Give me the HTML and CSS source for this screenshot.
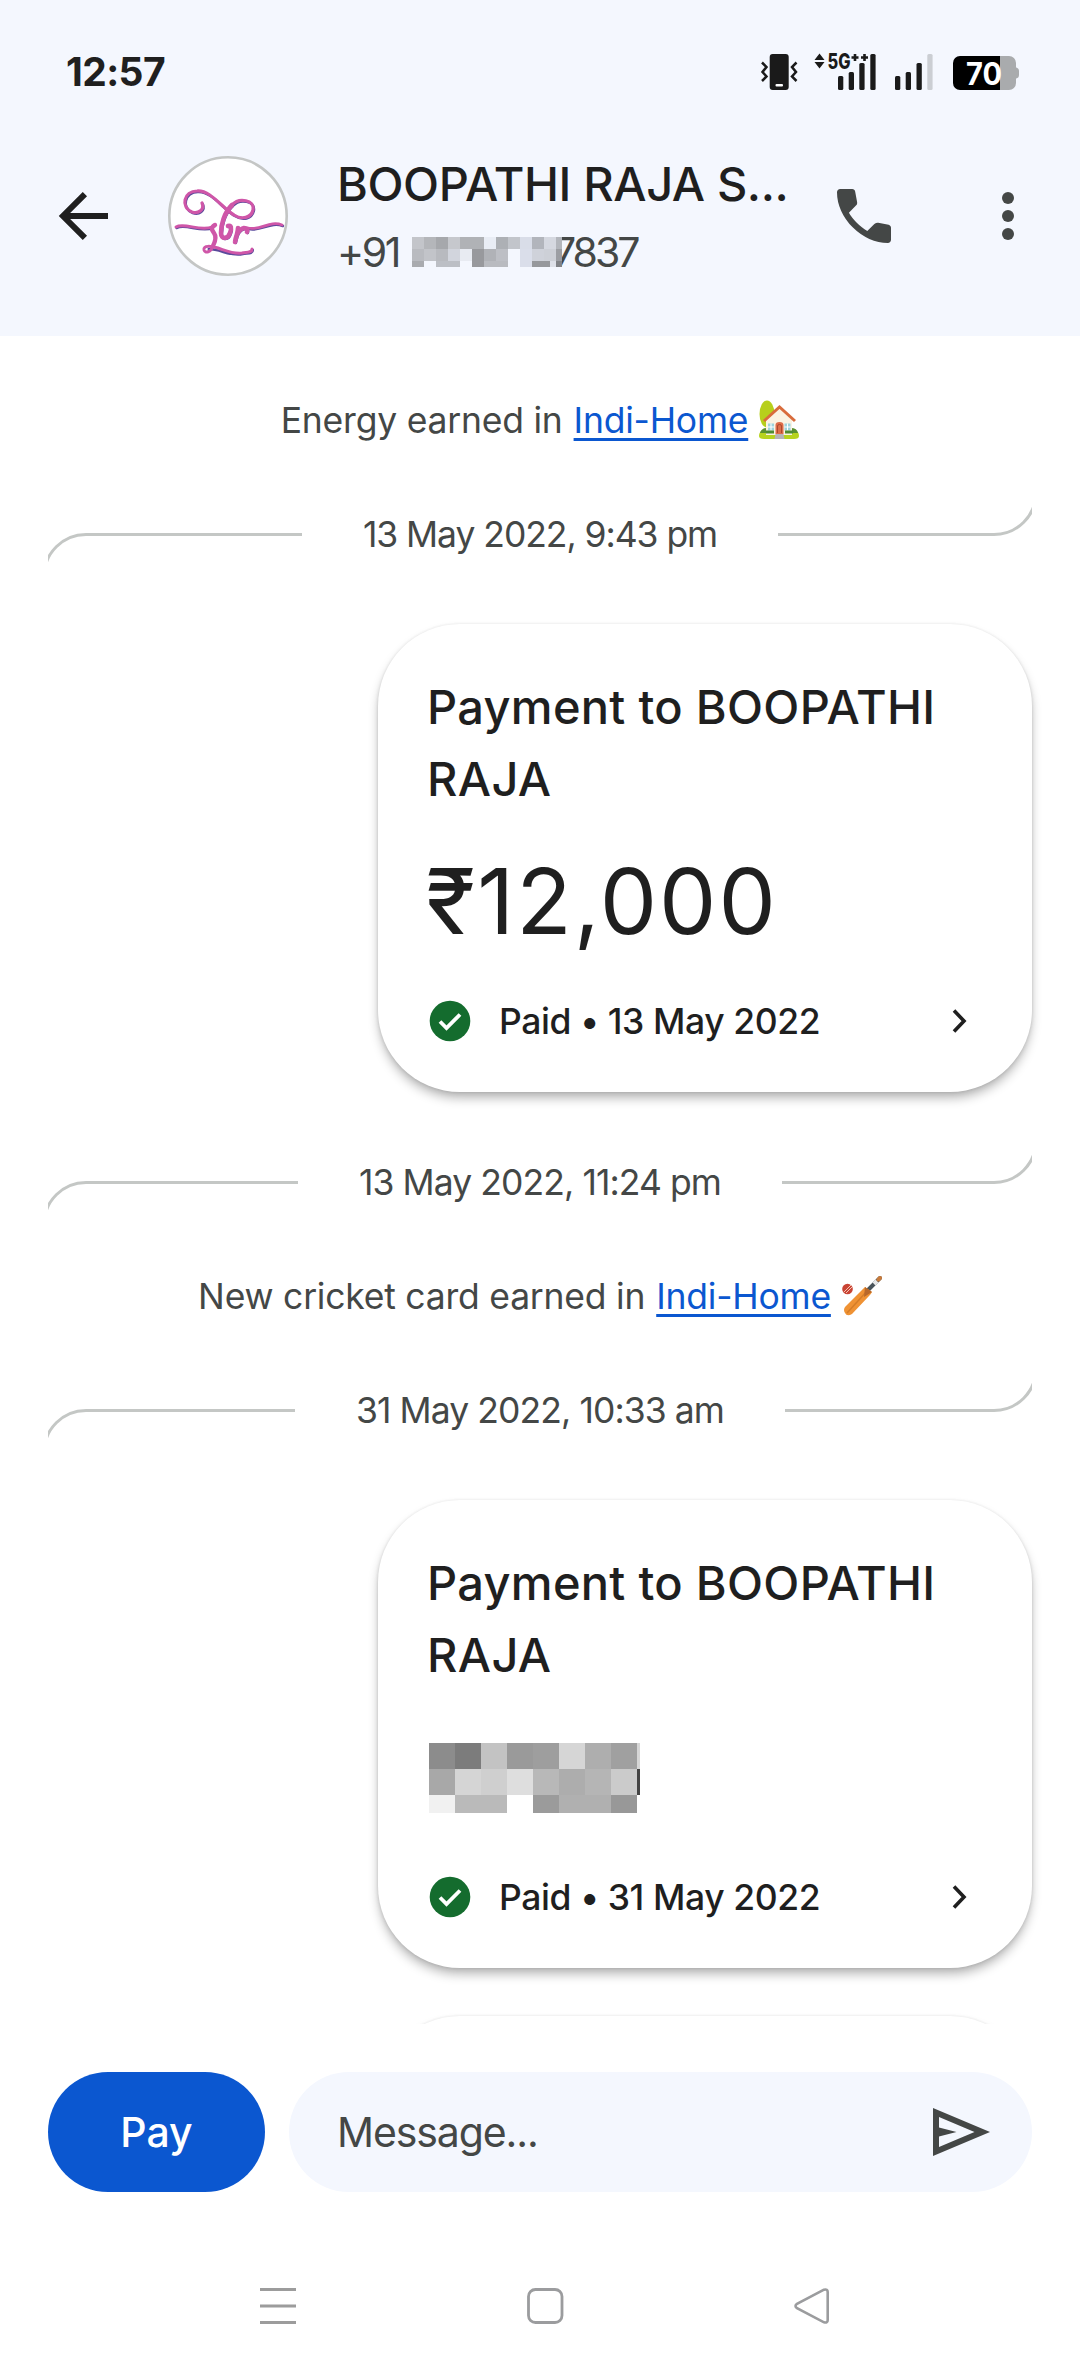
FILE: index.html
```html
<!DOCTYPE html>
<html lang="en">
<head>
<meta charset="utf-8">
<title>Chat</title>
<link rel="stylesheet" href="styles.css">
</head>
<body>
<div class="phone">
  <header class="top">
    <div class="status">
      <span class="clock">12:57</span>
      <svg class="status-icons" width="260" height="54" viewBox="760 40 260 54">
        <rect x="769.700" y="54" width="19" height="36" rx="3" fill="#1a1a1a"/>
        <rect x="775.500" y="84" width="7.500" height="2.400" rx="1" fill="#fff"/>
        <g fill="none" stroke="#1a1a1a" stroke-width="2.500">
          <path d="M762 62.500l4.500 4.500-4 5 4 4.500-4.500 4.500M796.500 62.500l-4.500 4.500 4 5-4 4.500 4.500 4.500"/>
        </g>
        <path d="M819.500 53.500l5 6.500h-10zM819.500 68.500l5-6.500h-10z" fill="#1a1a1a"/>
        <text x="827.500" y="68.800" class="net" textLength="23" lengthAdjust="spacingAndGlyphs">5G</text>
        <path d="M851.500 57.500h7M855 54v7M861 57.500h7M864.500 54v7" stroke="#1a1a1a" stroke-width="2.600"/>
        <g fill="#1a1a1a">
          <rect x="838" y="76" width="5.300" height="14" rx="1.500"/><rect x="848.700" y="72" width="5.300" height="18" rx="1.500"/>
          <rect x="859.300" y="63" width="5.300" height="27" rx="1.500"/><rect x="870.300" y="54" width="5.300" height="36" rx="1.500"/>
          <rect x="895" y="76" width="5.300" height="14" rx="1.500"/><rect x="905.700" y="72" width="5.300" height="18" rx="1.500"/>
          <rect x="916.500" y="63" width="5.300" height="27" rx="1.500"/>
        </g>
        <rect x="927.300" y="54" width="5.300" height="36" rx="1.500" fill="#cbced3"/>
        <path d="M1000 56h9a7 7 0 0 1 7 7v4.500q3 .5 3 3.500v4q0 3-3 3.500V83a7 7 0 0 1-7 7h-9z" fill="#a9abad"/>
        <path d="M1000 56h-40a7 7 0 0 0-7 7v20a7 7 0 0 0 7 7h40z" fill="#000"/>
        <text x="966" y="84.500" class="batt" textLength="36" lengthAdjust="spacingAndGlyphs">70</text>
      </svg>
    </div>
    <div class="bar">
      <svg class="back" width="72" height="72" viewBox="0 0 24 24"><path d="M20 12H5M12.300 4.700L5 12l7.300 7.300" fill="none" stroke="#1f1f1f" stroke-width="2"/></svg>
      <svg class="avatar" width="120" height="120" viewBox="0 0 120 120">
        <circle cx="60" cy="60" r="58.700" fill="#fff" stroke="#c4c6c5" stroke-width="2.600"/>
        <g fill="none" stroke-linecap="round" stroke-linejoin="round">
          <g stroke="#5a4a9c" stroke-width="2.600" transform="translate(.8 1)">
            <path d="M34 47c3 7-4 11-10 9-12-5-8-21 5-21 14-1 25 17 37 24 8 5 17 3 19-5 2-10-14-13-21-5"/>
            <path d="M8 71c8-5 24 5 36 0M80 72c12 3 22-8 34-3"/>
            <path d="M64 49c-8 8-11 20-11 28 0 7 7 6 9 0 2-5 1-8-2-7"/>
            <path d="M70 72c0 4-2 9-3 14 1-7 4-13 9-14 3 0 4 2 3 4"/>
            <path d="M40 92c12 0 22 8 34 5 5-1 10 0 10-4"/>
          </g>
          <g stroke="#cf56a8">
            <path stroke-width="3.200" d="M34 47c3 7-4 11-10 9-12-5-8-21 5-21 14-1 25 17 37 24 8 5 17 3 19-5 2-10-14-13-21-5"/>
            <path stroke-width="2.800" d="M8 71c8-5 24 5 36 0M80 72c12 3 22-8 34-3"/>
            <path stroke-width="4.600" d="M64 49c-8 8-11 20-11 28 0 7 7 6 9 0 2-5 1-8-2-7"/>
            <path stroke-width="4.600" d="M70 72c0 4-2 9-3 14 1-7 4-13 9-14 3 0 4 2 3 4"/>
            <path stroke-width="4.400" d="M47 69c-5 3-3 5-1 8 3 4 1 9-1 13"/>
            <path stroke-width="3" d="M45 90c-2 6-8 8-9 4-1-5 7-4 14-2 9 3 15 6 24 5 5-1 10 0 10-4"/>
          </g>
        </g>
      </svg>
      <div class="who">
        <div class="name">BOOPATHI RAJA S...</div>
        <div class="number"><span class="cc">+91</span>
          <svg class="mask" width="150" height="30" viewBox="0 0 150 30" shape-rendering="crispEdges">
            <path fill="#c3c5ca" d="M0 0h12v12H0z"/><path fill="#b4b6ba" d="M12 0h12v12H12z"/><path fill="#a6a8ac" d="M24 0h12v12H24z"/><path fill="#c6c8cd" d="M36 0h12v12H36z"/><path fill="#b0b2b6" d="M48 0h24v12H48z"/><path fill="#e9edf5" d="M72 0h12v12H72z"/><path fill="#adb0b5" d="M84 0h12v12H84z"/><path fill="#c2c5cb" d="M96 0h12v12H96z"/><path fill="#d9dde8" d="M108 0h12v12h-12z"/><path fill="#b2b5bc" d="M120 0h12v12h-12z"/><path fill="#d5d8e0" d="M132 0h12v12h-12z"/><path fill="#b3b6bc" d="M144 0h6v12h-6z"/>
            <path fill="#b9bbc0" d="M0 12h12v12H0z"/><path fill="#c2c4c9" d="M12 12h12v12H12z"/><path fill="#b8babf" d="M24 12h12v12H24z"/><path fill="#d2d5dd" d="M36 12h12v12H36z"/><path fill="#e8ebf2" d="M48 12h12v12H48z"/><path fill="#98999d" d="M60 12h12v12H60z"/><path fill="#b0b2b7" d="M72 12h12v12H72z"/><path fill="#bdbfc5" d="M84 12h12v12H84z"/><path fill="#f4f7fe" d="M96 12h12v18H96z"/><path fill="#dadeea" d="M108 12h12v12h-12z"/><path fill="#cfd2da" d="M120 12h12v12h-12z"/><path fill="#cdd0d7" d="M132 12h12v12h-12z"/><path fill="#9c9ea3" d="M144 12h6v12h-6z"/>
            <path fill="#a9abaf" d="M0 24h12v6H0z"/><path fill="#bcbfc5" d="M24 24h24v6H24z"/><path fill="#98999d" d="M60 24h12v6H60z"/><path fill="#b9bbc0" d="M72 24h24v6H72z"/><path fill="#dadeea" d="M108 24h12v6h-12z"/><path fill="#96989c" d="M120 24h18v6h-18z"/><path fill="#dde0e8" d="M138 24h6v6h-6z"/><path fill="#808286" d="M144 24h6v6h-6z"/>
          </svg><span class="tail">7837</span></div>
      </div>
      <svg class="call" width="72" height="72" viewBox="0 0 24 24"><path fill="#444746" d="M19.950 21q-3.125 0-6.175-1.362t-5.550-3.863-3.862-5.550T3 4.050q0-.45.3-.75t.75-.3H8.100q.35 0 .625.238t.325.562l.65 3.500q.05.4-.025.675T9.400 8.450L6.975 10.900q.5.925 1.187 1.787t1.513 1.663q.775.775 1.625 1.438T13.100 17l2.350-2.350q.225-.225.588-.337t.712-.063l3.450.7q.35.100.575.363T21 15.900v4.050q0 .45-.3.75t-.75.300"/></svg>
      <svg class="more" width="72" height="72" viewBox="0 0 24 24" fill="#444746"><circle cx="12" cy="6" r="2"/><circle cx="12" cy="12" r="2"/><circle cx="12" cy="18" r="2"/></svg>
    </div>
  </header>

  <main class="chat">
    <div class="note n1"><span>Energy earned in</span><a>Indi-Home</a>
      <svg class="emoji" width="40" height="40" viewBox="0 0 40 40">
        <ellipse cx="8" cy="14" rx="7.500" ry="13.500" fill="#b7cf1c"/>
        <path d="M0 36q0-5 5-6h30q5 1 5 6 0 3-5 3H5q-5 0-5-3z" fill="#b7d31e"/>
        <path d="M1 33q1-5 7-5h24q6 0 7 5z" fill="#5b9130"/>
        <path d="M20 8L7 20v15h26V20z" fill="#fbf3e2"/>
        <path d="M5 21L20.500 7 36 21" fill="none" stroke="#d96c3c" stroke-width="3"/>
        <path d="M9 23.500h6v7H9zM25.500 23.500h6v7h-6z" fill="#9ed3dc"/><path d="M12 23.500v7M9 27h6M28.500 23.500v7M25.500 27h6" stroke="#fff"/>
        <path d="M7 32h8M26 32h8" stroke="#4e8c33" stroke-width="3"/>
        <path d="M16.500 34V25q0-3 4-3t4 3v9z" fill="#dd6c48"/><path d="M18.500 33v-7q0-1.500 2-1.500t2 1.500v7" stroke="#ac4a2d" fill="none"/>
        <path d="M16.500 34h8l1 5h-10z" fill="#b6b3b5"/>
      </svg>
    </div>
    <div class="divider d1"><i class="rule left"><svg width="38" height="35" viewBox="0 0 38 35"><path d="M-4 43.500A42 42 0 0 1 38 1.500"/></svg></i><time>13 May 2022, 9:43 pm</time><i class="rule right"><svg width="38" height="35" viewBox="0 0 38 35"><path d="M0 33.500A42 42 0 0 0 42-8.500"/></svg></i></div>

    <section class="card">
      <h2>Payment to BOOPATHI<br>RAJA</h2>
      <div class="amount">₹12,000</div>
      <div class="paid">
        <svg width="42" height="42" viewBox="0 0 42 42"><circle cx="21" cy="21" r="20.300" fill="#146c2e"/><path d="M11 21.500l6.500 6.500 13.500-13.500" fill="none" stroke="#fff" stroke-width="3.800"/></svg>
        <span>Paid • 13 May 2022</span>
        <svg class="chev" width="16" height="26" viewBox="0 0 16 26"><path d="M2 2.500l10 10.500-10 10.500" fill="none" stroke="#1f1f1f" stroke-width="3.600"/></svg>
      </div>
    </section>

    <div class="divider d2"><i class="rule left"><svg width="38" height="35" viewBox="0 0 38 35"><path d="M-4 43.500A42 42 0 0 1 38 1.500"/></svg></i><time>13 May 2022, 11:24 pm</time><i class="rule right"><svg width="38" height="35" viewBox="0 0 38 35"><path d="M0 33.500A42 42 0 0 0 42-8.500"/></svg></i></div>
    <div class="note n2"><span>New cricket card earned in</span><a>Indi-Home</a>
      <svg class="emoji" width="40" height="40" viewBox="0 0 40 40">
        <path d="M26 14L38 2" stroke="#49545b" stroke-width="4" stroke-linecap="round"/><path d="M32 8l3-3" stroke="#e8e8e8" stroke-width="4"/><path d="M36.500 3.500L38 2" stroke="#c77b3c" stroke-width="4" stroke-linecap="round"/>
        <path d="M23 11l7 5q-1 2-3 4L10 38q-5 3-7-1-2-3 0-6l17-17q2-2 3-3z" fill="#ef9234"/><path d="M26 14L5 37" stroke="#d57d28" stroke-width="1.500"/><path d="M23 11l7 5-8 5z" fill="#b9682a"/>
        <circle cx="5.500" cy="13" r="5.300" fill="#c94334"/><path d="M2 16l7-7M4 17l6-6" stroke="#f5c5b3" stroke-width="1"/>
      </svg>
    </div>
    <div class="divider d3"><i class="rule left"><svg width="38" height="35" viewBox="0 0 38 35"><path d="M-4 43.500A42 42 0 0 1 38 1.500"/></svg></i><time>31 May 2022, 10:33 am</time><i class="rule right"><svg width="38" height="35" viewBox="0 0 38 35"><path d="M0 33.500A42 42 0 0 0 42-8.500"/></svg></i></div>

    <section class="card">
      <h2>Payment to BOOPATHI<br>RAJA</h2>
      <div class="amount hidden-amount">
        <svg width="212" height="70" viewBox="0 0 212 70" shape-rendering="crispEdges">
          <path fill="#8c8c8c" d="M0 0h26v26H0z"/><path fill="#7c7c7c" d="M26 0h26v26H26z"/><path fill="#c3c3c3" d="M52 0h26v26H52z"/><path fill="#9a9a9a" d="M78 0h26v26H78z"/><path fill="#9e9e9e" d="M104 0h26v26h-26z"/><path fill="#d6d6d6" d="M130 0h26v26h-26z"/><path fill="#aeaeae" d="M156 0h26v26h-26z"/><path fill="#a0a0a0" d="M182 0h26v26h-26z"/><path fill="#d6d6d6" d="M208 0h3v26h-3z"/>
          <path fill="#a8a8a8" d="M0 26h26v26H0z"/><path fill="#d5d5d5" d="M26 26h26v26H26z"/><path fill="#cfcfcf" d="M52 26h26v26H52z"/><path fill="#dedede" d="M78 26h26v26H78z"/><path fill="#b8b8b8" d="M104 26h26v26h-26z"/><path fill="#adadad" d="M130 26h26v26h-26z"/><path fill="#b5b5b5" d="M156 26h26v26h-26z"/><path fill="#cbcbcb" d="M182 26h26v26h-26z"/><path fill="#444" d="M208 26h3v26h-3z"/>
          <path fill="#f1f1f1" d="M0 52h26v18H0z"/><path fill="#bababa" d="M26 52h52v18H26z"/><path fill="#9b9b9b" d="M104 52h26v18h-26z"/><path fill="#b0b0b0" d="M130 52h52v18h-52z"/><path fill="#989898" d="M182 52h26v18h-26z"/>
        </svg>
      </div>
      <div class="paid">
        <svg width="42" height="42" viewBox="0 0 42 42"><circle cx="21" cy="21" r="20.300" fill="#146c2e"/><path d="M11 21.500l6.500 6.500 13.500-13.500" fill="none" stroke="#fff" stroke-width="3.800"/></svg>
        <span>Paid • 31 May 2022</span>
        <svg class="chev" width="16" height="26" viewBox="0 0 16 26"><path d="M2 2.500l10 10.500-10 10.500" fill="none" stroke="#1f1f1f" stroke-width="3.600"/></svg>
      </div>
    </section>
    <section class="card next"></section>
  </main>

  <footer class="composer">
    <button class="pay">Pay</button>
    <div class="field"><span>Message...</span>
      <svg width="58" height="50" viewBox="0 0 58 50"><path fill="#444746" fill-rule="evenodd" d="M1 1l57 24L1 49zM7 10v10.500l17.500 4.500L7 29.500V40l35.500-15z"/></svg>
    </div>
  </footer>
  <nav class="nav">
    <svg width="36" height="38" viewBox="0 0 36 38"><path d="M0 2.500h36M0 19h36M0 35.500h36" stroke="#9c9c9c" stroke-width="3"/></svg>
    <svg width="38" height="38" viewBox="0 0 38 38"><rect x="2.500" y="2.500" width="33.500" height="33" rx="7" fill="none" stroke="#9b9c9e" stroke-width="2.800"/></svg>
    <svg width="36" height="38" viewBox="0 0 36 38"><path d="M30 2.700L3 16.800q-3 2.200 0 4.400l27 14.100q3.700 1 3.700-2.300V5q0-3.300-3.700-2.300z" fill="none" stroke="#9b9c9e" stroke-width="2.600"/></svg>
  </nav>
</div>
</body>
</html>
```
FILE: styles.css
```css
* { box-sizing: border-box; }
body { margin: 0; background: #fff; font-family: Inter, "Noto Sans", sans-serif; color: #1f1f1f; }
svg { display: block; flex: none; }
.phone { width: 1080px; height: 2372px; display: flex; flex-direction: column; overflow: hidden; }

.top { height: 336px; flex: none; background: #f4f7fe; }
.status { height: 144px; padding: 40px 60px 0 66px; display: flex; justify-content: space-between; align-items: flex-start; }
.clock { font-size: 39px; line-height: 40px; font-weight: 650; letter-spacing: -.6px; margin-top: 12px; }
.net { font-size: 21px; font-weight: 800; fill: #1a1a1a; }
.batt { font-size: 31px; font-weight: 700; fill: #fff; }
.bar { height: 144px; padding-left: 48px; display: flex; align-items: center; }
.avatar { margin-left: 48px; }
.who { width: 470px; margin-left: 49px; white-space: nowrap; }
.name { font-size: 47px; line-height: 68px; padding-bottom: 4px; font-weight: 460; letter-spacing: -.4px; }
.number { font-size: 41px; line-height: 60px; display: flex; align-items: center; color: #444746; }
.cc { width: 75px; letter-spacing: -2.4px; }
.tail { letter-spacing: -3px; margin-left: -9px; }
.mask { position: relative; }
.call { margin-left: 21px; }
.more { margin-left: 72px; }

.chat { height: 1688px; flex: none; padding: 57px 48px 0; display: flex; flex-direction: column; gap: 60px; overflow: hidden; }
.note { height: 54px; flex: none; display: flex; align-items: center; justify-content: center; gap: 11px; font-size: 35.500px; letter-spacing: -.22px; color: #444746; white-space: nowrap; }
.note a { color: #0b57d0; text-decoration: underline; text-decoration-thickness: 3px; text-underline-offset: 5px; text-decoration-skip-ink: none; }
.divider { height: 54px; flex: none; display: flex; align-items: center; gap: 61px; font-size: 35.500px; color: #444746; white-space: nowrap; }
.divider time { letter-spacing: -.92px; }
.d1 time { letter-spacing: -1.050px; }
.rule { flex: 1; display: flex; }
.rule::before, .rule::after { height: 3px; background: #c4c7c5; }
.rule path { fill: none; stroke: #c4c7c5; stroke-width: 3; }
.left { align-items: flex-start; margin-top: 32px; }
.left::after { content: ""; flex: 1; }
.right { align-items: flex-end; margin-bottom: 32px; }
.right::before { content: ""; flex: 1; }

.card { width: 654px; height: 468px; flex: none; align-self: flex-end; margin: 3px 0; padding: 47px 62px 0 51px; border-radius: 82px; background: #fff; box-shadow: 0 0 3px rgba(0,0,0,.08), 0 7px 11px -1px rgba(0,0,0,.28), 0 2px 5px rgba(0,0,0,.06); }
.card h2 { margin: 0 0 0 -2px; font-size: 47px; line-height: 72px; font-weight: 460; letter-spacing: .3px; white-space: nowrap; }
.amount { height: 100px; margin-top: 36px; font-size: 91px; line-height: 100px; letter-spacing: 2px; text-indent: -3px; }
.hidden-amount { padding-top: 16px; }
.paid { height: 48px; margin-top: 46px; display: flex; align-items: center; font-size: 35.500px; font-weight: 460; letter-spacing: -.4px; white-space: nowrap; }
.paid span { margin-left: 28px; }
.chev { margin-left: auto; margin-right: 2px; }
.next { margin-top: -15px; }

.composer { height: 240px; flex: none; padding: 48px 48px 0; display: flex; align-items: flex-start; gap: 24px; }
.pay { width: 217px; height: 120px; border: 0; border-radius: 60px; background: #0b57d0; color: #fff; font: 500 41px/120px Inter, sans-serif; padding: 0; }
.field { flex: 1; height: 120px; border-radius: 60px; background: #f4f7fe; padding: 0 42px 0 48px; display: flex; align-items: center; justify-content: space-between; font-size: 41px; letter-spacing: -1.100px; color: #444746; }
.nav { height: 108px; flex: none; padding: 23px 250px 0 260px; display: flex; justify-content: space-between; }
```
